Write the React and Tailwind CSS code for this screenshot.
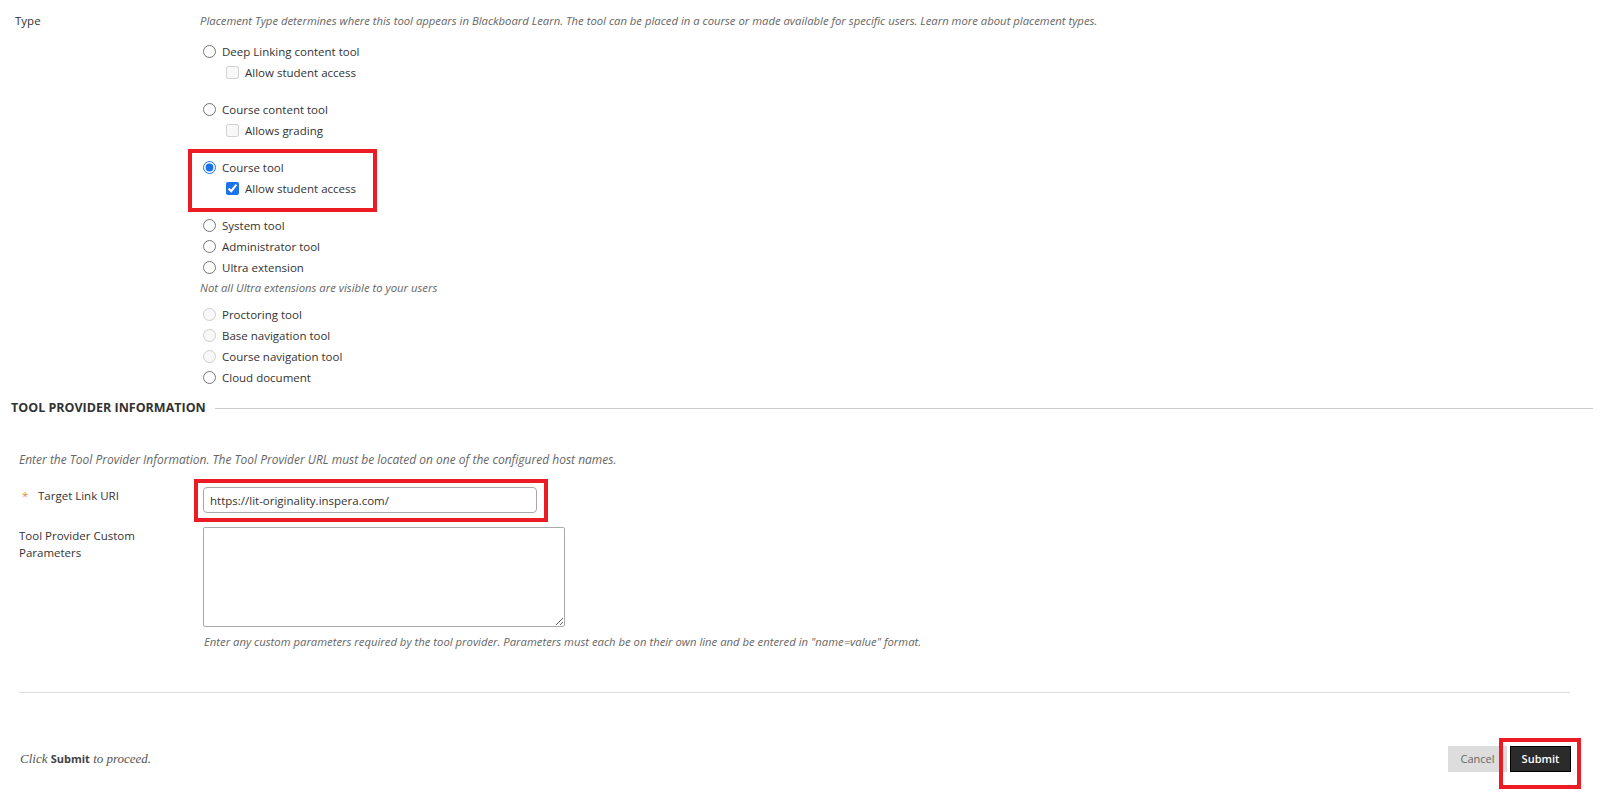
import { useState } from "react";

const Radio = ({ label, checked, disabled, name = "placement", onChange }) => (
  <label className="flex items-center h-[21px] gap-[6px]">
    <input
      type="radio"
      name={name}
      checked={checked}
      disabled={disabled}
      onChange={onChange}
      className="m-0 ml-[3px] w-[13px] h-[13px] accent-[#1a73e8]"
    />
    <span>{label}</span>
  </label>
);

const Check = ({ label, checked, disabled, onChange }) => (
  <label className="flex items-center h-[21px] gap-[6px] pl-[26px]">
    <input
      type="checkbox"
      checked={checked}
      disabled={disabled}
      onChange={onChange}
      className="m-0 w-[13px] h-[13px] accent-[#1a73e8]"
    />
    <span>{label}</span>
  </label>
);

const App = () => {
  const [studentAccess, setStudentAccess] = useState(true);
  const [uri, setUri] = useState("https://lit-originality.inspera.com/");

  return (
    <div className="w-[1600px] min-h-[792px] bg-white font-['Open_Sans',sans-serif] text-[11.5px] text-[#333] overflow-hidden">
      <div className="flex pt-[10px]">
        <div className="w-[200px] pl-[15px] leading-[21px]">Type</div>
        <div className="flex-1 leading-[21px]">
          <p className="italic text-[11.3px] text-[#666]">
            Placement Type determines where this tool appears in Blackboard Learn. The tool can be placed in a course or made available for specific users. Learn more about placement types.
          </p>

          <div className="mt-[10px]">
            <Radio label="Deep Linking content tool" checked={false} onChange={() => {}} />
            <Check label="Allow student access" checked={false} disabled />
          </div>

          <div className="mt-[16px]">
            <Radio label="Course content tool" checked={false} onChange={() => {}} />
            <Check label="Allows grading" checked={false} disabled />
          </div>

          <div className="relative mt-[16px]">
            <div className="absolute -left-[12px] -top-[8px] w-[189px] -bottom-[13px] border-4 border-[#ec1c24] pointer-events-none" />
            <Radio label="Course tool" checked onChange={() => {}} />
            <Check label="Allow student access" checked={studentAccess} onChange={() => setStudentAccess(!studentAccess)} />
          </div>

          <div className="mt-[16px]">
            <Radio label="System tool" checked={false} onChange={() => {}} />
            <Radio label="Administrator tool" checked={false} onChange={() => {}} />
            <Radio label="Ultra extension" checked={false} onChange={() => {}} />
            <p className="italic text-[11.3px] text-[#666] leading-[20px]">Not all Ultra extensions are visible to your users</p>
          </div>

          <div className="mt-[6px]">
            <Radio label="Proctoring tool" disabled checked={false} />
            <Radio label="Base navigation tool" disabled checked={false} />
            <Radio label="Course navigation tool" disabled checked={false} />
            <Radio label="Cloud document" checked={false} onChange={() => {}} />
          </div>
        </div>
      </div>

      <div className="flex items-center mt-[10px] pl-[11px] pr-[7px] h-[21px]">
        <h2 className="font-bold text-[12.5px] uppercase whitespace-nowrap">Tool Provider Information</h2>
        <div className="flex-1 ml-[9px] border-t border-[#ccc]" />
      </div>

      <p className="mt-[30px] pl-[19px] italic text-[12px] text-[#666] leading-[21px]">
        Enter the Tool Provider Information. The Tool Provider URL must be located on one of the configured host names.
      </p>

      <div className="flex mt-[17px]">
        <div className="w-[203px] pl-[22px] leading-[17px] flex">
          <span className="text-[#e08a4a] w-[16px]">*</span>
          <span>Target Link URI</span>
        </div>
        <div className="relative">
          <div className="absolute -left-[9px] -top-[8px] -right-[11px] -bottom-[9px] border-4 border-[#ec1c24] pointer-events-none" />
          <input
            type="text"
            value={uri}
            onChange={(e) => setUri(e.target.value)}
            className="block w-[334px] h-[26px] px-[6px] border border-[#aaa] rounded-[4px] text-[11.5px] text-[#333] outline-none"
          />
        </div>
      </div>

      <div className="flex mt-[14px]">
        <div className="w-[203px] pl-[19px] pr-[40px] leading-[17px]">Tool Provider Custom Parameters</div>
        <div>
          <textarea className="block w-[362px] h-[100px] border border-[#aaa] rounded-[2px] outline-none p-[4px]" />
          <p className="mt-[6px] ml-[1px] italic text-[11.3px] text-[#666] leading-[17px]">
            Enter any custom parameters required by the tool provider. Parameters must each be on their own line and be entered in "name=value" format.
          </p>
        </div>
      </div>

      <div className="mt-[42px] ml-[19px] mr-[30px] border-t border-[#ddd]" />

      <div className="flex items-center justify-between mt-[53px] pl-[20px] pr-[29px]">
        <p className="font-['Liberation_Serif',serif] italic text-[13px] text-[#555]">
          Click <span className="not-italic font-bold font-['Open_Sans',sans-serif] text-[11px] text-[#444]">Submit</span> to proceed.
        </p>
        <div className="flex gap-[3px]">
          <button className="w-[59px] h-[26px] bg-[#ddd] text-[#666] text-[11px]">Cancel</button>
          <div className="relative">
            <div className="absolute -left-[11px] -top-[8px] -right-[10px] -bottom-[17px] border-4 border-[#ec1c24] pointer-events-none" />
            <button className="w-[61px] h-[26px] bg-[#2b2b2b] border border-black text-white font-semibold text-[11px]">Submit</button>
          </div>
        </div>
      </div>
    </div>
  );
};

export default App;
